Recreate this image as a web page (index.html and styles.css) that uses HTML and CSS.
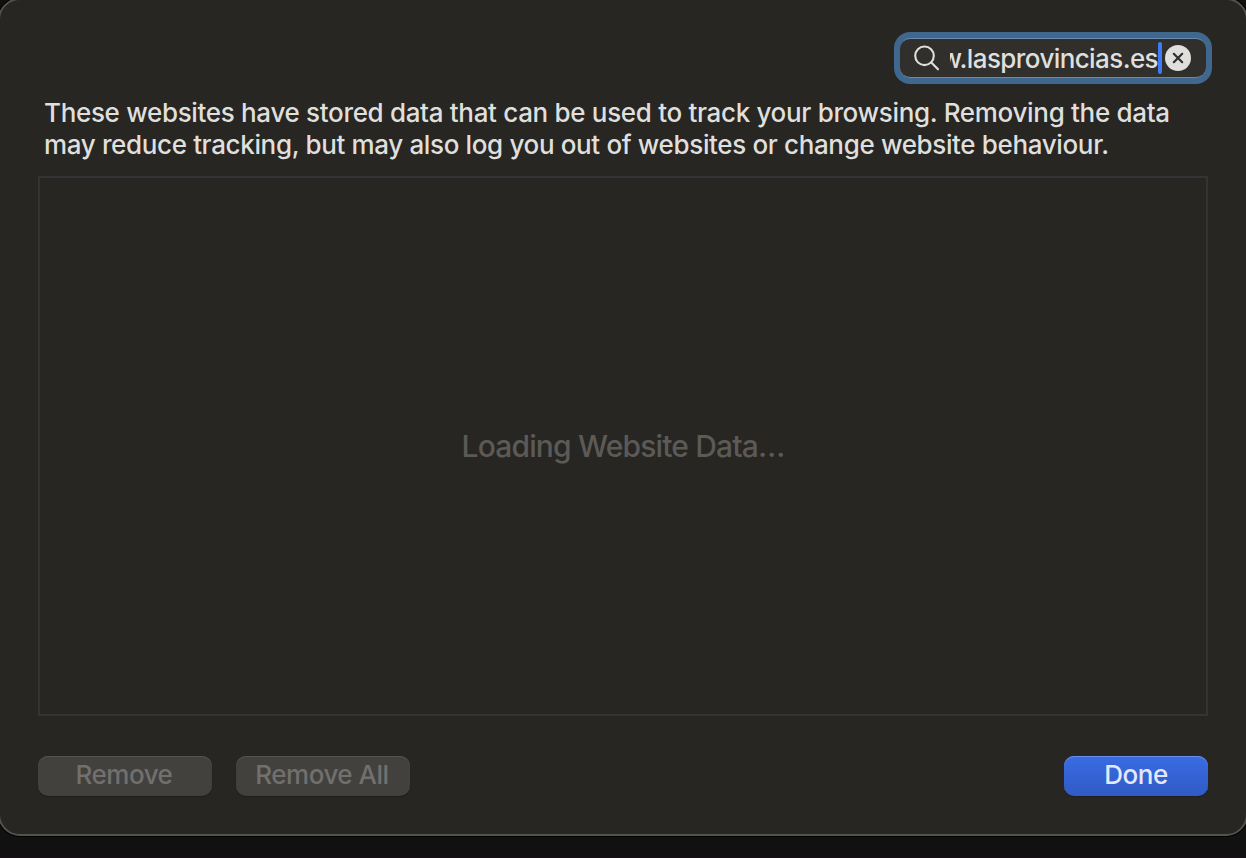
FILE: index.html
```html
<!DOCTYPE html>
<html lang="en">
  <head>
    <meta charset="UTF-8" />
    <meta name="viewport" content="width=device-width" />
    <title>Website Data</title>
    <link rel="stylesheet" href="styles.css">
  </head>
  <body>
    <main class="sheet">
      <div class="search">
        <svg class="search-icon" viewBox="0 0 26 26">
          <circle cx="10.5" cy="10.8" r="9.3" />
          <path d="M17.3 17.6 L24 24.3" />
        </svg>
        <div class="search-text"><span>w.lasprovincias.es</span></div>
        <span class="caret"></span>
        <svg class="clear-icon" viewBox="0 0 26 26">
          <circle cx="13" cy="13" r="13" />
          <path d="M8.8 8.8 L17.2 17.2 M17.2 8.8 L8.8 17.2" />
        </svg>
      </div>

      <p class="description">
        <span class="line first">These websites have stored data that can be used to track your browsing. Removing the data</span>
        <span class="line second">may reduce tracking, but may also log you out of websites or change website behaviour.</span>
      </p>

      <div class="list"><span class="loading">Loading Website Data…</span></div>

      <div class="buttons">
        <button class="button" disabled>Remove</button>
        <button class="button" disabled>Remove All</button>
        <button class="button done">Done</button>
      </div>
    </main>
  </body>
</html>
```
FILE: styles.css
```css
:root {
  --bg-color: #272622;
  --text-color: #dfdfdd;
  --focus-color: #40688f;
}

* {
  box-sizing: border-box;
}

body {
  margin: 0;
  height: 858px;
  overflow: hidden;
  font-family: Inter, "Liberation Sans", sans-serif;
  font-size: 26px;
  font-weight: 450;
  color: var(--text-color);
  background: linear-gradient(#111 857px, #1b1017 857px);
}

.sheet {
  display: flex;
  flex-direction: column;
  width: 1250px;
  height: 838px;
  margin: -2px 0 0 -2px;
  padding: 38px;
  border: 2px solid #53524f;
  border-radius: 22px;
  background: var(--bg-color);
  box-shadow: 0 0 0 1px #000;
}

.search {
  display: flex;
  align-items: center;
  align-self: flex-end;
  width: 306px;
  height: 40px;
  padding: 0 15px 0 14px;
  margin-right: 2px;
  border: 1px solid #668bad;
  border-width: 1px 0;
  border-radius: 10px;
  background: #302f2c;
  box-shadow: 0 0 0 6px var(--focus-color);
}

.search-icon {
  width: 26px;
  height: 26px;
  fill: none;
  stroke: var(--text-color);
  stroke-width: 2.1;
  stroke-linecap: round;
}

.search-text {
  display: flex;
  justify-content: flex-end;
  width: 208px;
  margin-left: 10px;
  padding-top: 2px;
  overflow: hidden;
  line-height: 34px;
  letter-spacing: -0.6px;
  white-space: nowrap;
}

.caret {
  width: 4px;
  height: 32px;
  border-radius: 2px;
  background: #3d7bf7;
}

.clear-icon {
  width: 26px;
  height: 26px;
  margin-left: 3px;
  fill: var(--text-color);
}

.clear-icon path {
  stroke: #302f2c;
  stroke-width: 2.2;
  stroke-linecap: round;
}

.description {
  margin: 19px 0 0 6px;
  line-height: 32px;
}

.line {
  display: block;
  white-space: nowrap;
}

.first {
  letter-spacing: -0.325px;
}

.second {
  letter-spacing: -0.36px;
}

.list {
  display: flex;
  align-items: center;
  justify-content: center;
  height: 540px;
  margin-top: 15px;
  border: 2px solid #343335;
}

.loading {
  font-size: 30px;
  letter-spacing: -0.84px;
  color: #5b5a57;
}

.buttons {
  display: flex;
  gap: 24px;
  margin-top: 40px;
}

.button {
  width: 174px;
  height: 40px;
  padding: 0 2px 4px 0;
  border: 0;
  border-radius: 10px;
  font: inherit;
  letter-spacing: -0.5px;
  color: #71706e;
  background: #42413e;
  box-shadow: inset 0 1px #555451, 0 1px 1px #1e1d1a;
}

.done {
  width: 144px;
  margin-left: auto;
  padding-right: 0;
  color: #e3e9fa;
  background: linear-gradient(#396be3, #315bc5);
  box-shadow: inset 0 1px #6990ec, 0 1px 1px #1d1e24;
}
```
